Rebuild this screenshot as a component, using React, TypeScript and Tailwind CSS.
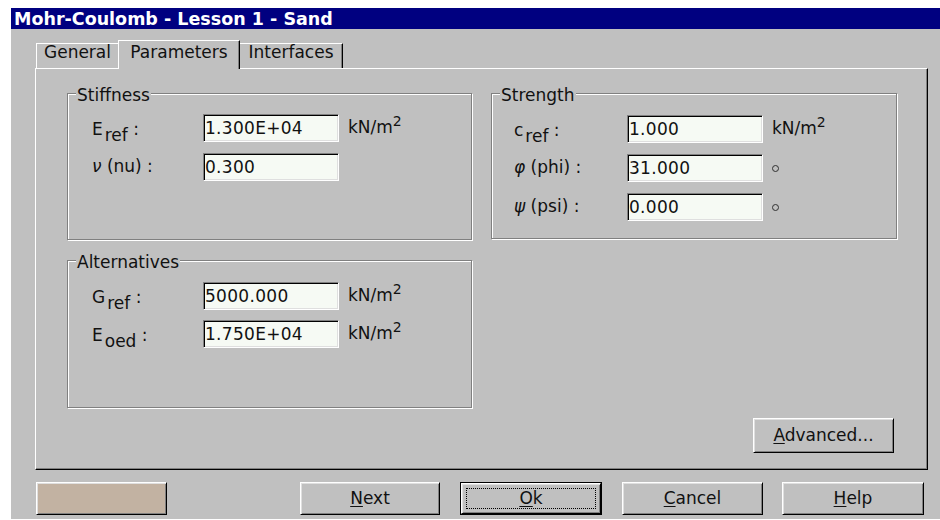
import React from "react";

const GRAY = "bg-[#c0c0c0]";

function Raised({
  className = "",
  children,
}: {
  className?: string;
  children?: React.ReactNode;
}) {
  return (
    <div
      className={`flex items-center justify-center border border-t-white border-l-white border-r-black border-b-black shadow-[inset_1px_1px_0_#dfdfdf,inset_-1px_-1px_0_#808080] ${className}`}
    >
      {children}
    </div>
  );
}

function Field({ value }: { value: string }) {
  return (
    <div className="h-[28px] w-[136px] shrink-0 flex items-center border border-t-[#808080] border-l-[#808080] border-r-white border-b-white bg-[#f6faf4] pl-[1px] shadow-[inset_1px_1px_0_#000,inset_-1px_-1px_0_#dfdfdf] leading-[20px] tracking-[0.3px]">
      {value}
    </div>
  );
}

function Sub({ main, sub }: { main: string; sub: string }) {
  return (
    <span className="relative top-[2px] whitespace-pre">
      {main}
      <span className="relative top-[6px] ml-[2px]">{sub}</span>
      {" :"}
    </span>
  );
}

function Greek({ sym, name }: { sym: string; name: string }) {
  return (
    <span className="whitespace-pre">
      <span className="italic">{sym}</span>
      {` (${name}) :`}
    </span>
  );
}

function Unit() {
  return (
    <span className="ml-[9px] whitespace-pre">
      kN/m<span className="relative -top-[7px] text-[14px]">2</span>
    </span>
  );
}

function Degree() {
  return (
    <span className="ml-[9px] inline-block h-[7px] w-[7px] rounded-full border border-[#303030]" />
  );
}

function Row({
  label,
  value,
  unit,
  labelW = 111,
}: {
  label: React.ReactNode;
  value: string;
  unit?: React.ReactNode;
  labelW?: number;
}) {
  return (
    <div className="flex h-[28px] items-center">
      <div
        className={labelW === 111 ? "w-[111px] shrink-0" : "w-[113px] shrink-0"}
      >
        {label}
      </div>
      <Field value={value} />
      {unit}
    </div>
  );
}

function Group({
  title,
  className = "",
  children,
}: {
  title: string;
  className?: string;
  children: React.ReactNode;
}) {
  return (
    <div
      className={`relative border border-[#808080] shadow-[inset_1px_1px_0_#fff,1px_1px_0_#fff] ${className}`}
    >
      <span className={`absolute left-[8px] top-[-9px] ${GRAY} px-[1px] leading-[20px]`}>
        {title}
      </span>
      {children}
    </div>
  );
}

export default function App() {
  return (
    <div className="h-[520px] w-[940px] bg-white pl-[11px] pt-[8px] font-['DejaVu_Sans',sans-serif] text-[17px] text-[#111]">
      <div className={`flex h-[511px] flex-col ${GRAY}`}>
        {/* caption */}
        <div className="flex h-[21px] items-center bg-[#000080] pl-[3px] text-[17.5px] font-bold leading-[20px] text-white">
          Mohr-Coulomb - Lesson 1 - Sand
        </div>

        <div className="flex flex-col pl-[24px] pr-[12px]">
          {/* tab strip */}
          <div className="mt-[11px] flex h-[28px] items-end">
            <div className="ml-[1px] flex h-[25px] w-[82px] justify-center border-l border-t border-l-white border-t-white pt-[1px] leading-[14px]">
              General
            </div>
            <div
              className={`relative z-10 -mb-[1px] flex h-[29px] w-[122px] justify-center border-l border-r border-t border-l-white border-r-black border-t-white pt-[4px] leading-[14px] shadow-[inset_-1px_0_0_#808080] ${GRAY}`}
            >
              Parameters
            </div>
            <div className="flex h-[25px] w-[103px] justify-center border-r border-t border-r-black border-t-white pt-[1px] leading-[14px] shadow-[inset_-1px_0_0_#808080]">
              Interfaces
            </div>
          </div>

          {/* tab page */}
          <div className="flex h-[402px] gap-[19px] border border-b-black border-l-white border-r-black border-t-white pb-[16px] pl-[31px] pt-[24px] shadow-[inset_-1px_-1px_0_#808080]">
            <div className="flex w-[405px] flex-col gap-[20px]">
              <Group title="Stiffness" className="h-[147px] pl-[24px] pt-[20px]">
                <div className="flex flex-col gap-[11px]">
                  <Row label={<Sub main="E" sub="ref" />} value="1.300E+04" unit={<Unit />} />
                  <Row label={<Greek sym="ν" name="nu" />} value="0.300" />
                </div>
              </Group>
              <Group title="Alternatives" className="h-[148px] pl-[24px] pt-[21px]">
                <div className="flex flex-col gap-[10px]">
                  <Row label={<Sub main="G" sub="ref" />} value="5000.000" unit={<Unit />} />
                  <Row label={<Sub main="E" sub="oed" />} value="1.750E+04" unit={<Unit />} />
                </div>
              </Group>
            </div>

            <div className="flex w-[406px] flex-col">
              <Group title="Strength" className="h-[146px] pl-[22px] pt-[21px]">
                <div className="flex flex-col gap-[11px]">
                  <Row labelW={113} label={<Sub main="c" sub="ref" />} value="1.000" unit={<Unit />} />
                  <Row labelW={113} label={<Greek sym="φ" name="phi" />} value="31.000" unit={<Degree />} />
                  <Row labelW={113} label={<Greek sym="ψ" name="psi" />} value="0.000" unit={<Degree />} />
                </div>
              </Group>
              <Raised className="mr-[3px] mt-auto h-[35px] w-[141px] self-end">
                <span>
                  <u className="underline-offset-2">A</u>dvanced...
                </span>
              </Raised>
            </div>
          </div>

          {/* dialog buttons */}
          <div className="mt-[12px] flex h-[33px]">
            <Raised className="ml-[1px] h-full w-[131px] bg-[#c2b2a2]" />
            <Raised className="ml-[133px] h-full w-[140px]">
              <span>
                <u className="underline-offset-2">N</u>ext
              </span>
            </Raised>
            <div className="ml-[20px] h-full w-[142px] border border-black">
              <Raised className="relative h-full w-full">
                <span className="pointer-events-none absolute inset-[4px] border border-dotted border-black" />
                <span>
                  <u className="underline-offset-2">O</u>k
                </span>
              </Raised>
            </div>
            <Raised className="ml-[20px] h-full w-[141px]">
              <span>
                <u className="underline-offset-2">C</u>ancel
              </span>
            </Raised>
            <Raised className="ml-[19px] h-full w-[142px]">
              <span>
                <u className="underline-offset-2">H</u>elp
              </span>
            </Raised>
          </div>
        </div>
      </div>
    </div>
  );
}
